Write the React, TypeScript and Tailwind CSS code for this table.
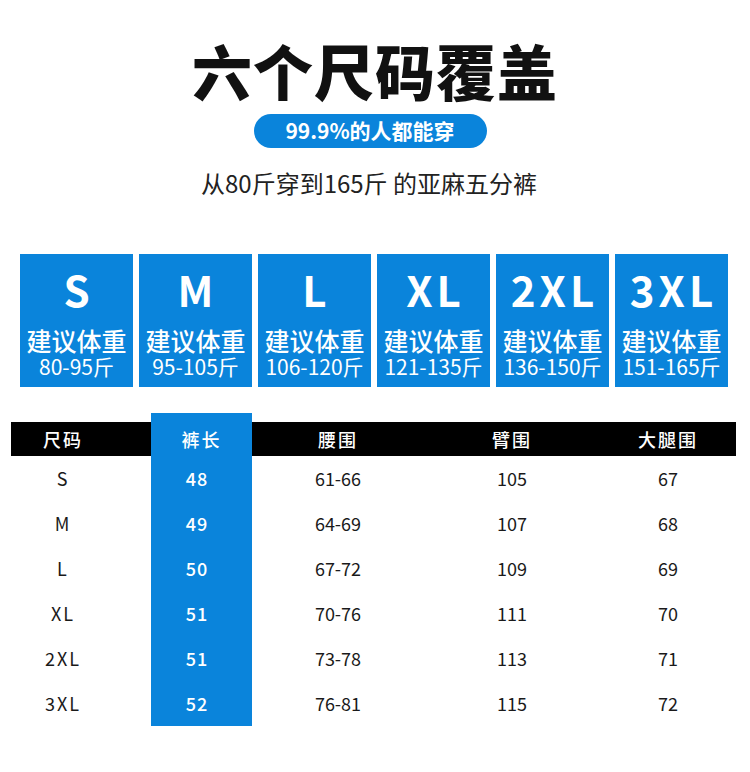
import React from "react";

const cards = [
  { s: "S", w: "80-95斤" },
  { s: "M", w: "95-105斤" },
  { s: "L", w: "106-120斤" },
  { s: "XL", w: "121-135斤" },
  { s: "2XL", w: "136-150斤" },
  { s: "3XL", w: "151-165斤" },
];

const rows = [
  ["S", "48", "61-66", "105", "67"],
  ["M", "49", "64-69", "107", "68"],
  ["L", "50", "67-72", "109", "69"],
  ["XL", "51", "70-76", "111", "70"],
  ["2XL", "51", "73-78", "113", "71"],
  ["3XL", "52", "76-81", "115", "72"],
];

function Col({
  title,
  values,
  className,
  cellClass,
  blue,
}: {
  title: string;
  values: string[];
  className: string;
  cellClass?: string;
  blue?: boolean;
}) {
  return (
    <div className={`flex flex-col ${className} ${blue ? "bg-[#0a84db]" : ""}`}>
      <div className={`mt-[9px] h-[34px] flex items-center justify-center text-white text-[18px] font-medium tracking-[2px] ${blue ? "" : "bg-black"} ${cellClass ?? ""}`}>
        {title}
      </div>
      {values.map((v, i) => (
        <div
          key={i}
          className={`h-[45px] flex items-center justify-center text-[18px] ${blue ? "text-white font-medium tracking-[1px] pr-[9px]" : "text-[#1a1a1a]"} ${cellClass ?? ""}`}
        >
          {v}
        </div>
      ))}
    </div>
  );
}

export default function App() {
  return (
    <div className="w-[750px] h-[772px] bg-white font-['Noto_Sans_CJK_SC',sans-serif] flex flex-col items-center pt-[40px]">
      <div className="text-[60px] leading-[60px] font-black text-[#111] tracking-[1px]">六个尺码覆盖</div>
      <div className="mt-[14px] ml-[-10px] w-[233px] h-[34px] rounded-full bg-[#0a84db] flex items-center justify-center text-white text-[21px] font-bold">
        99.9%的人都能穿
      </div>
      <div className="mt-[21px] ml-[-12px] text-[24px] leading-[28px] text-[#222]">从80斤穿到165斤 的亚麻五分裤</div>

      <div className="mt-[57px] w-[708px] ml-[-2px] flex gap-[6px]">
        {cards.map((c) => (
          <div key={c.s} className="w-[113px] h-[133px] bg-[#0a84db] flex flex-col items-center text-white pt-[14px]">
            <div className="text-[42px] leading-[42px] font-bold tracking-[4px] pl-[4px]">{c.s}</div>
            <div className="mt-[17px] text-[25px] leading-[26px] font-medium whitespace-nowrap">建议体重</div>
            <div className="mt-[3px] text-[21px] leading-[21px] whitespace-nowrap">{c.w}</div>
          </div>
        ))}
      </div>

      <div className="mt-[26px] w-[725px] ml-[-3px] flex">
        <Col title="尺码" values={rows.map((r) => r[0])} className="w-[140px]" cellClass="pr-[36px] tracking-[2px]" />
        <Col title="裤长" values={rows.map((r) => r[1])} className="w-[101px]" blue />
        <Col title="腰围" values={rows.map((r) => r[2])} className="w-[172px]" />
        <Col title="臂围" values={rows.map((r) => r[3])} className="w-[176px]" />
        <Col title="大腿围" values={rows.map((r) => r[4])} className="w-[136px]" />
      </div>
    </div>
  );
}
